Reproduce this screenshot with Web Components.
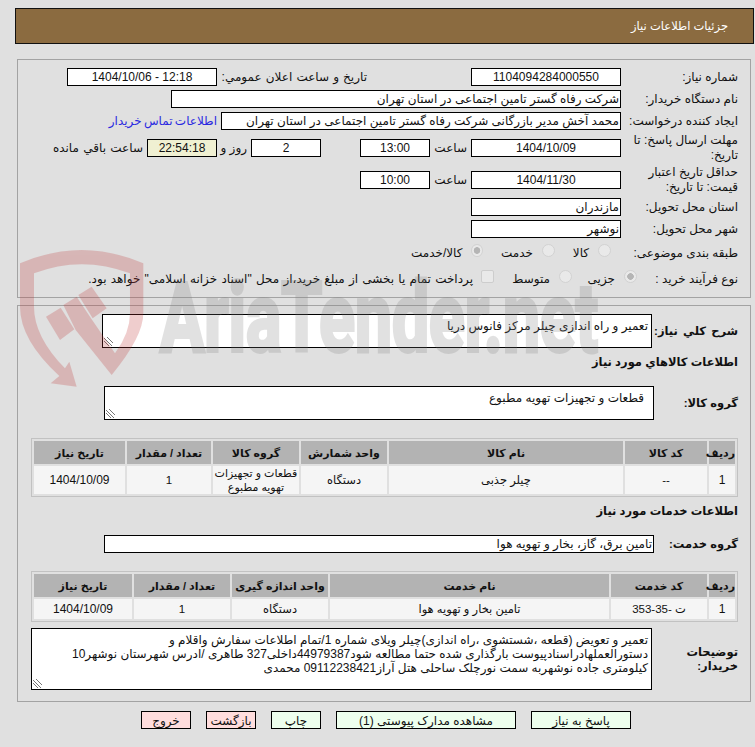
<!DOCTYPE html>
<html lang="fa">
<head>
<meta charset="utf-8">
<title>جزئیات اطلاعات نیاز</title>
<style>
html, body { margin: 0; padding: 0; }
body {
    background: #e0e0e0;
    padding: 8px 1px 0 15px;
    position: relative;
    height: 739px;
    overflow: hidden;
    font: 12px "Liberation Sans", "DejaVu Sans", sans-serif;
    color: #111;
    direction: rtl;
}
.flat { display: inline-block; white-space: nowrap; }
a { color: #2a2ae0; text-decoration: none; }
</style>
</head>
<body>

<need-header>جزئیات اطلاعات نیاز</need-header>

<info-panel style="margin-top:15px; --pt:8px; --pb:9px">
    <form-row label="شماره نياز:">
        <field-box w="150" center>1104094284000550</field-box>
        <span class="flat" style="margin-right:104px; width:150px; word-spacing:.8px">تاریخ و ساعت اعلان عمومي:</span>
        <field-box w="150" center>12:18 - 1404/10/06</field-box>
    </form-row>
    <form-row label="نام دستگاه خريدار:" style="margin-top:4px">
        <field-box w="450">شرکت رفاه گستر تامین اجتماعی در استان تهران</field-box>
    </form-row>
    <form-row label="ايجاد کننده درخواست:" style="margin-top:4px">
        <field-box w="400">محمد آخش مدیر بازرگانی شرکت رفاه گستر تامین اجتماعی در استان تهران</field-box>
        <a class="flat" style="margin-right:4px; word-spacing:-1px">اطلاعات تماس خريدار</a>
    </form-row>
    <form-row label="مهلت ارسال پاسخ: تا تاریخ:" style="margin-top:3px; --h:30px">
        <field-box w="150" center>1404/10/09</field-box>
        <span class="flat" style="margin-right:4px; width:37px">ساعت</span>
        <field-box w="70" center>13:00</field-box>
        <span style="width:39px"></span>
        <field-box w="70" center>2</field-box>
        <span class="flat" style="margin-right:4px; width:30px">روز و</span>
        <field-box w="70" center tint>22:54:18</field-box>
        <span class="flat" style="margin-right:4px; word-spacing:1px">ساعت باقي مانده</span>
    </form-row>
    <form-row label="حداقل تاریخ اعتبار قیمت: تا تاریخ:" style="margin-top:2px; --h:30px">
        <field-box w="150" center>1404/11/30</field-box>
        <span class="flat" style="margin-right:4px; width:37px">ساعت</span>
        <field-box w="70" center>10:00</field-box>
    </form-row>
    <form-row label="استان محل تحویل:" style="margin-top:3px">
        <field-box w="150">مازندران</field-box>
    </form-row>
    <form-row label="شهر محل تحویل:" style="margin-top:4px">
        <field-box w="150">نوشهر</field-box>
    </form-row>
    <form-row label="طبقه بندی موضوعی:" style="margin-top:6px">
        <radio-item w="56" style="margin-right:10px">كالا</radio-item>
        <radio-item w="72">خدمت</radio-item>
        <radio-item w="72" checked>كالا/خدمت</radio-item>
    </form-row>
    <form-row label="نوع فرآیند خرید :" style="margin-top:8px">
        <radio-item w="65" checked style="margin-right:-16px">جزیی</radio-item>
        <radio-item w="78">متوسط</radio-item>
        <check-item style="word-spacing:.9px">پرداخت تمام يا بخشی از مبلغ خرید،از محل "اسناد خزانه اسلامی" خواهد بود.</check-item>
    </form-row>
</info-panel>

<info-panel style="margin-top:7px; --pt:8px; --pb:11px">
    <form-row label="شرح کلي نياز:" bold style="--label:86px; --h:34px; --ws:2px; --wrap:nowrap">
        <note-box w="550" h="34">تعمیر و راه اندازی چیلر مرکز فانوس دریا</note-box>
    </form-row>
    <section-title style="margin-top:6px">اطلاعات کالاهاي مورد نياز</section-title>
    <form-row label="گروه کالا:" bold style="margin-top:16px; --label:84px; --h:34px">
        <note-box w="550" h="34" inset="9">قطعات و تجهیزات تهویه مطبوع</note-box>
    </form-row>
    <need-table style="margin-top:18px" body-h="28"
        cols="ردیف:26|کد کالا:82|نام کالا:234|واحد شمارش:86|گروه کالا:86|تعداد / مقدار:84|تاریخ نیاز:91"
        row="1|--|چیلر جذبی|دستگاه|<span style='font-size:11px'>قطعات و تجهیزات<br>تهویه مطبوع</span>|1|1404/10/09"></need-table>
    <section-title style="margin-top:6px">اطلاعات خدمات مورد نياز</section-title>
    <form-row label="گروه خدمت:" bold style="margin-top:16px; --label:84px">
        <field-box w="550">تامین برق، گاز، بخار و تهویه هوا</field-box>
    </form-row>
    <need-table style="margin-top:18px" body-h="20"
        cols="ردیف:26|کد خدمت:96|نام خدمت:279|واحد اندازه گیری:96|تعداد / مقدار:96|تاریخ نیاز:98"
        row="1|ت -35-353|تامین بخار و تهویه هوا|دستگاه|1|1404/10/09"></need-table>
    <form-row label="توضیحات خریدار:" bold style="margin-top:6px; --label:86px; --h:62px">
        <note-box w="621" h="62">تعمیر و تعویض (قطعه ،شستشوی ،راه اندازی)چیلر ویلای شماره 1/تمام اطلاعات سفارش واقلام و<br>دستورالعملهادراسنادپیوست بارگذاری شده حتما مطالعه شود44979387داخلی327 طاهری /ادرس شهرستان نوشهر10<br>کیلومتری جاده نوشهربه سمت نورچلک ساحلی هتل آراز09112238421 محمدی</note-box>
    </form-row>
</info-panel>

<action-bar>
    <action-btn w="100">پاسخ به نیاز</action-btn>
    <action-btn w="180">مشاهده مدارک پیوستی (1)</action-btn>
    <action-btn w="50">چاپ</action-btn>
    <action-btn w="50" danger>بازگشت</action-btn>
    <action-btn w="50" danger>خروج</action-btn>
</action-bar>

<water-mark></water-mark>

<script>
class NeedHeader extends HTMLElement {
    constructor() {
        super();
        this.attachShadow({mode: 'open'}).innerHTML = `
<style>
:host {
    display: flex;
    align-items: center;
    box-sizing: border-box;
    height: 36px;
    background: #8b6b40;
    border: 1px solid #111;
    color: #fff;
    font-size: 11.5px;
    padding-right: 25px;
    padding-bottom: 1px;
}
</style>
<slot></slot>`;
    }
}

class InfoPanel extends HTMLElement {
    constructor() {
        super();
        this.attachShadow({mode: 'open'}).innerHTML = `
<style>
:host {
    display: block;
    box-sizing: border-box;
    margin-right: 3px;
    margin-left: 2px;
    border: 1px solid #a3a3a3;
    padding: var(--pt, 8px) 12px var(--pb, 8px) 0;
}
</style>
<slot></slot>`;
    }
}

class FormRow extends HTMLElement {
    constructor() {
        super();
        this.attachShadow({mode: 'open'}).innerHTML = `
<style>
:host {
    display: flex;
    align-items: center;
    min-height: var(--h, 18px);
}
.label {
    flex: 0 0 var(--label, 117px);
    box-sizing: border-box;
    min-width: 0;
    line-height: 15px;
    padding-left: 4px;
}
:host([bold]) .label {
    font-weight: bold;
    font-size: 11.5px;
    line-height: 14px;
    padding-left: 2px;
    word-spacing: var(--ws, 0);
    white-space: var(--wrap, normal);
}
.body { display: flex; align-items: center; flex: 1; min-width: 0; }
</style>
<div class="label"></div>
<div class="body"><slot></slot></div>`;
        this.shadowRoot.querySelector('.label').textContent = this.getAttribute('label');
    }
}

class FieldBox extends HTMLElement {
    constructor() {
        super();
        this.attachShadow({mode: 'open'}).innerHTML = `
<style>
:host {
    display: flex;
    align-items: center;
    flex: none;
    box-sizing: border-box;
    height: 18px;
    background: #fff;
    border: 1px solid #000;
    padding: 0 1px;
    white-space: nowrap;
    overflow: hidden;
}
:host([center]) { justify-content: center; }
:host([tint]) { background: #f0f0d2; }
</style>
<slot></slot>`;
        this.style.width = this.getAttribute('w') + 'px';
    }
}

class NoteBox extends HTMLElement {
    constructor() {
        super();
        this.attachShadow({mode: 'open'}).innerHTML = `
<style>
:host {
    display: block;
    position: relative;
    flex: none;
    box-sizing: border-box;
    background: #fff;
    border: 1px solid #000;
    padding: 4px 3px 0;
    line-height: 14px;
    white-space: nowrap;
    overflow: hidden;
}
svg { position: absolute; left: 1px; bottom: 1px; }
</style>
<slot></slot>
<svg width="9" height="9" viewBox="0 0 9 9" fill="none" stroke="#777" stroke-width="1">
    <path d="M0 1L8 9M0 4L5 9M3 0L9 6"/>
</svg>`;
        this.style.width = this.getAttribute('w') + 'px';
        this.style.height = this.getAttribute('h') + 'px';
        if (this.hasAttribute('inset')) this.style.paddingRight = this.getAttribute('inset') + 'px';
    }
}

class SectionTitle extends HTMLElement {
    constructor() {
        super();
        this.attachShadow({mode: 'open'}).innerHTML = `
<style>
:host { display: block; height: 16px; line-height: 16px; font-weight: bold; font-size: 11.5px; }
</style>
<slot></slot>`;
    }
}

class RadioItem extends HTMLElement {
    constructor() {
        super();
        this.attachShadow({mode: 'open'}).innerHTML = `
<style>
:host { display: flex; align-items: center; flex: none; white-space: nowrap; }
.dot {
    box-sizing: border-box;
    width: 13px;
    height: 13px;
    margin-left: 9px;
    margin-top: -5px;
    border: 1px solid #d2d2d2;
    border-radius: 50%;
    background: #e9e9e9;
}
:host([checked]) .dot { background: radial-gradient(circle, #b5b5b5 0 3px, #e9e9e9 3.6px); }
</style>
<span class="dot"></span><slot></slot>`;
        this.style.width = this.getAttribute('w') + 'px';
    }
}

class CheckItem extends HTMLElement {
    constructor() {
        super();
        this.attachShadow({mode: 'open'}).innerHTML = `
<style>
:host { display: flex; align-items: center; flex: none; white-space: nowrap; }
.box {
    box-sizing: border-box;
    width: 13px;
    height: 13px;
    margin-left: 8px;
    margin-top: -5px;
    border: 1px solid #cdcdcd;
    border-radius: 2px;
    background: #e9e9e9;
}
</style>
<span class="box"></span><slot></slot>`;
    }
}

class NeedTable extends HTMLElement {
    constructor() {
        super();
        this.attachShadow({mode: 'open'});
        const cols = this.getAttribute('cols').split('|').map(c => c.split(':'));
        const row = this.getAttribute('row').split('|');
        const bodyH = this.getAttribute('body-h');
        this.shadowRoot.innerHTML = `
<style>
:host { display: block; width: 707px; }
table {
    box-sizing: border-box;
    width: 707px;
    table-layout: fixed;
    border: 1px solid #c2c2c2;
    border-spacing: 2px;
}
th, td { padding: 0; text-align: center; white-space: nowrap; line-height: 14px; }
th { height: 23px; background: #b3b3b3; font-size: 11px; font-weight: bold; }
td { height: ${bodyH}px; background: #f5f5f5; font-size: 11.5px; }
td:last-child, td:first-child { font-size: 12px; }
</style>
<table>
    <colgroup>${cols.map(c => `<col style="width:${c[1]}px">`).join('')}</colgroup>
    <tr>${cols.map(c => `<th>${c[0]}</th>`).join('')}</tr>
    <tr>${row.map(v => `<td>${v}</td>`).join('')}</tr>
</table>`;
    }
}

class ActionBar extends HTMLElement {
    constructor() {
        super();
        this.attachShadow({mode: 'open'}).innerHTML = `
<style>
:host { display: flex; gap: 15px; margin-top: 9px; padding-right: 123px; }
</style>
<slot></slot>`;
    }
}

class ActionBtn extends HTMLElement {
    constructor() {
        super();
        this.attachShadow({mode: 'open'}).innerHTML = `
<style>
:host {
    display: flex;
    align-items: center;
    justify-content: center;
    box-sizing: border-box;
    height: 18px;
    padding-top: 1px;
    background: #eeffee;
    border: 1px solid #000;
    white-space: nowrap;
}
:host([danger]) { background: #ffdddd; }
</style>
<slot></slot>`;
        this.style.width = this.getAttribute('w') + 'px';
    }
}

// لوگوی کمرنگ روی کل صفحه
class WaterMark extends HTMLElement {
    constructor() {
        super();
        this.attachShadow({mode: 'open'}).innerHTML = `
<style>
:host { position: absolute; left: 0; top: 0; width: 755px; height: 747px; pointer-events: none; direction: ltr; }
svg { display: block; }
</style>
<svg width="755" height="747" viewBox="0 0 755 747">
    <g transform="translate(10 240) scale(.3333)" fill="#be3232" opacity=".24">
        <path d="M30 70Q215 -10 400 70L400 220Q400 290 305 405L197 270L160 195L200 170L245 238L315 340Q360 280 360 220L360 100Q215 45 72 100L72 200Q72 290 165 385L178 365L200 440L122 430L148 408Q30 300 30 200Z"/>
        <path d="M108 230L152 203L193 268L150 300Z"/>
        <path d="M205 165L245 140L290 205L248 235Z"/>
    </g>
    <g opacity=".22" fill="#7c7c7c" stroke="#7c7c7c" stroke-width="4">
        <text x="160" y="351" font-family="Roboto, sans-serif" font-weight="700" font-size="97" textLength="438" lengthAdjust="spacingAndGlyphs">AriaTender.net</text>
    </g>
</svg>`;
    }
}

window.customElements.define('need-header', NeedHeader);
window.customElements.define('info-panel', InfoPanel);
window.customElements.define('form-row', FormRow);
window.customElements.define('field-box', FieldBox);
window.customElements.define('note-box', NoteBox);
window.customElements.define('section-title', SectionTitle);
window.customElements.define('radio-item', RadioItem);
window.customElements.define('check-item', CheckItem);
window.customElements.define('need-table', NeedTable);
window.customElements.define('action-bar', ActionBar);
window.customElements.define('action-btn', ActionBtn);
window.customElements.define('water-mark', WaterMark);
</script>
</body>
</html>
